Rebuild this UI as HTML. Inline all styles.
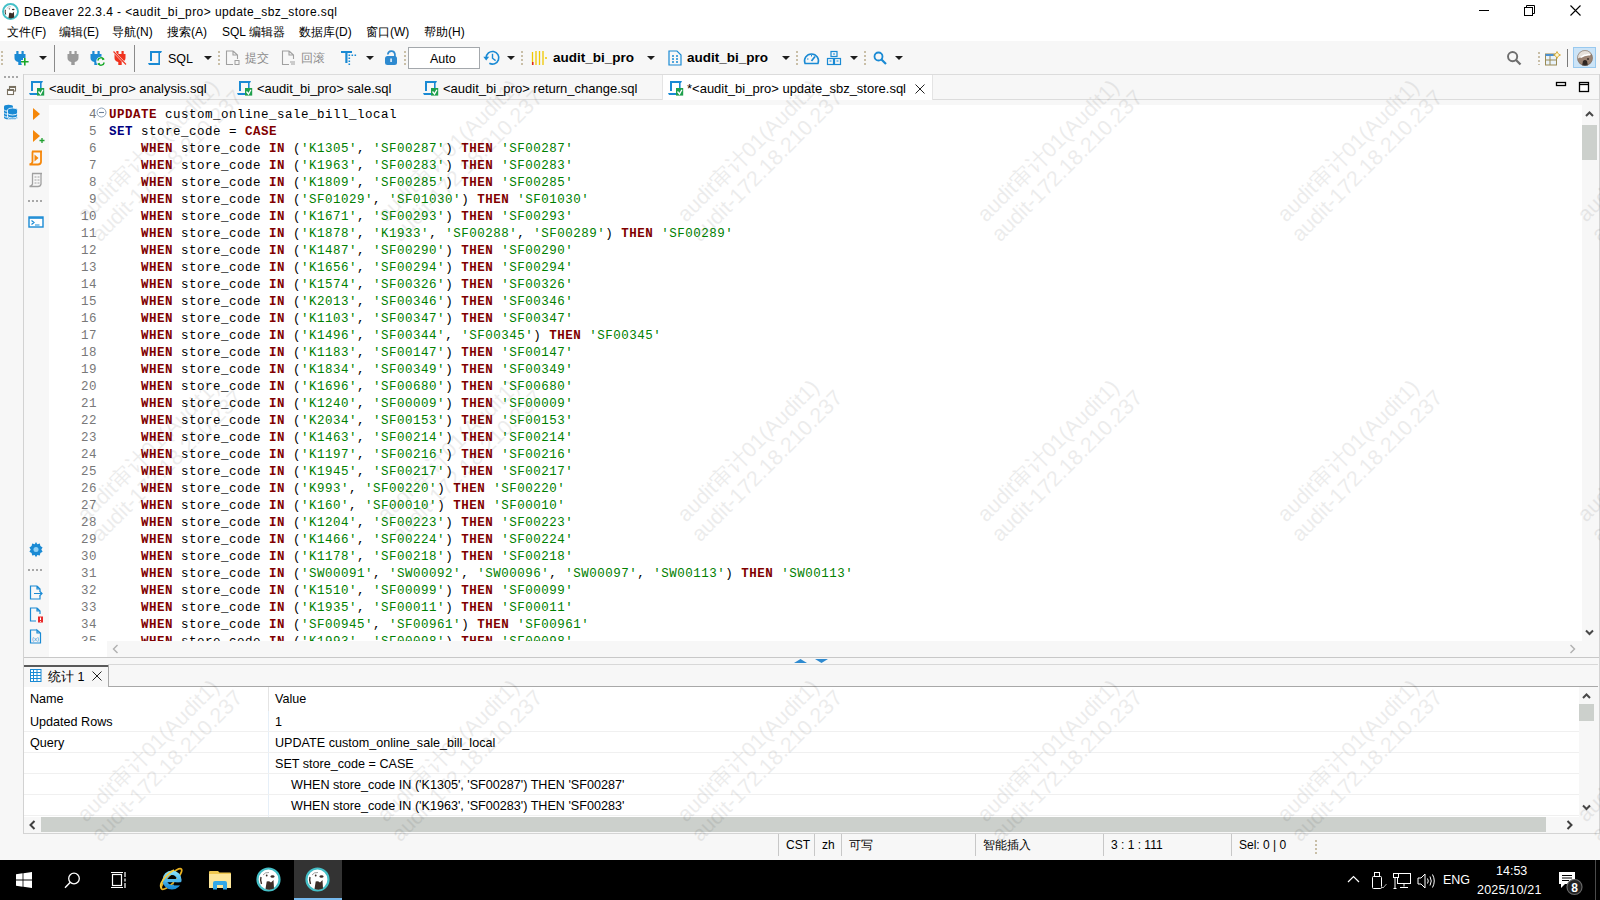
<!DOCTYPE html>
<html><head><meta charset="utf-8">
<style>
*{margin:0;padding:0;box-sizing:border-box}
html,body{width:1600px;height:900px;overflow:hidden;background:#f7f7f7;font-family:"Liberation Sans",sans-serif;font-size:12px;color:#000}
.a{position:absolute}
.t{position:absolute;white-space:nowrap;font-family:"Liberation Sans",sans-serif;font-size:12px;line-height:14px}
svg{position:absolute;overflow:visible}
.ln{position:absolute;left:49px;width:48px;text-align:right;font-family:"Liberation Mono",monospace;font-size:12.5px;letter-spacing:0.5px;line-height:17px;color:#787878;padding-top:2px}
.cl{position:absolute;left:109px;white-space:pre;font-family:"Liberation Mono",monospace;font-size:12.5px;letter-spacing:0.5px;line-height:17px;color:#000;padding-top:2px}
.k{color:#800000;font-weight:bold}
.b{color:#000080;font-weight:bold}
.g{color:#008000}
.grip{position:absolute;width:2px;background:repeating-linear-gradient(to bottom,#c9bfa8 0,#c9bfa8 2px,transparent 2px,transparent 4px)}
.vsep{position:absolute;width:1px;background:#8a8a8a}
.arr{position:absolute;width:0;height:0;border-left:4px solid transparent;border-right:4px solid transparent;border-top:4px solid #1e1e1e}
.wm{position:absolute;width:0;height:0;transform-origin:0 0;transform:rotate(-45deg);font-family:"Liberation Sans",sans-serif;font-size:21.5px;line-height:24px;color:#000;opacity:0.07;white-space:nowrap}
.wm div{position:relative;top:-19px}
.row{position:absolute;left:24px;width:1555px;height:21px;border-bottom:1px solid #f0f0f0}
.sbsep{position:absolute;top:834px;width:1px;height:22px;background:#c8c8c8}
</style></head><body>

<!-- ===== TITLE + MENU ===== -->
<div class="a" style="left:0;top:0;width:1600px;height:41px;background:#fff"></div>
<svg style="left:2px;top:3px" width="17" height="17" viewBox="0 0 25 25"><circle cx="12.5" cy="12.5" r="11" fill="#fff" stroke="#45c0c8" stroke-width="2.8"/><path d="M9.5 22 L10.7 14.5 Q13 13.5 15 15.5 L17.5 13 L18 21.5 Q14 23.5 9.5 22z" fill="#3a2c26"/><ellipse cx="16.5" cy="9.5" rx="2" ry="1.2" fill="#3a2c26"/><circle cx="10.7" cy="8.5" r="0.9" fill="#3a2c26"/><path d="M5 10 Q4 13 5.5 17" fill="none" stroke="#3a2c26" stroke-width="1.4"/><path d="M7 8 Q9 5 13 5.5" fill="none" stroke="#888" stroke-width="0.8"/></svg>
<div class="t" style="left:24px;top:5px;letter-spacing:0.42px">DBeaver 22.3.4 - &lt;audit_bi_pro&gt; update_sbz_store.sql</div>
<!-- window controls -->
<div class="a" style="left:1479px;top:10px;width:10px;height:1px;background:#000"></div>
<svg style="left:1524px;top:5px" width="12" height="12" viewBox="0 0 12 12"><rect x="0.5" y="2.5" width="8" height="8" fill="none" stroke="#000"/><path d="M2.5 2.5 V0.5 H10.5 V8.5 H8.5" fill="none" stroke="#000"/></svg>
<svg style="left:1570px;top:5px" width="11" height="11" viewBox="0 0 11 11"><path d="M0.5 0.5 L10.5 10.5 M10.5 0.5 L0.5 10.5" stroke="#000" stroke-width="1.1"/></svg>

<div class="t" style="left:7px;top:25px">文件(F)</div>
<div class="t" style="left:59px;top:25px">编辑(E)</div>
<div class="t" style="left:112px;top:25px">导航(N)</div>
<div class="t" style="left:167px;top:25px">搜索(A)</div>
<div class="t" style="left:222px;top:25px">SQL 编辑器</div>
<div class="t" style="left:299px;top:25px">数据库(D)</div>
<div class="t" style="left:366px;top:25px">窗口(W)</div>
<div class="t" style="left:424px;top:25px">帮助(H)</div>

<!-- ===== TOOLBAR ===== -->
<div class="a" style="left:0;top:41px;width:1600px;height:34px;background:#f7f7f7"></div><div class="a" style="left:23px;top:74px;width:1577px;height:1px;background:#dcdcdc"></div>
<div class="grip" style="left:1px;top:51px;height:14px"></div>
<!-- plug + -->
<svg style="left:13px;top:50px" width="17" height="16" viewBox="0 0 17 16"><path d="M3.3 1 h2.2 v3 h-2.2z M8.5 1 h2.2 v3 h-2.2z M1.5 4 H12.5 V8 Q12.5 11 8.7 12 V15 H5.3 V12 Q1.5 11 1.5 8 Z" fill="#1a8ad4"/><path d="M11.8 8 V15.5 M8 11.75 H15.6" stroke="#f7f7f7" stroke-width="3.6"/><path d="M11.8 8 V15.5 M8 11.75 H15.6" stroke="#18a828" stroke-width="1.6"/></svg>
<div class="arr" style="left:39px;top:56px"></div>
<div class="vsep" style="left:54px;top:45px;height:27px"></div>
<svg style="left:66px;top:50px" width="14" height="16" viewBox="0 0 14 16"><path d="M3.3 1 h2.2 v3 h-2.2z M8.5 1 h2.2 v3 h-2.2z M1.5 4 H12.5 V8 Q12.5 11 8.7 12 V15 H5.3 V12 Q1.5 11 1.5 8 Z" fill="#9a9a9a"/></svg>
<svg style="left:89px;top:50px" width="17" height="16" viewBox="0 0 17 16"><path d="M3.3 1 h2.2 v3 h-2.2z M8.5 1 h2.2 v3 h-2.2z M1.5 4 H12.5 V8 Q12.5 11 8.7 12 V15 H5.3 V12 Q1.5 11 1.5 8 Z" fill="#1a8ad4"/><circle cx="12" cy="11.5" r="4.8" fill="#f7f7f7"/><path d="M8.8 10.5 a3.3 3.3 0 0 1 6 -1.2 M15.2 12.5 a3.3 3.3 0 0 1 -6 1.2" fill="none" stroke="#18a828" stroke-width="1.4"/><path d="M13.3 7.6 l2.4 1.6 l-2.6 1z M10.7 15.4 l-2.4 -1.6 l2.6 -1z" fill="#18a828"/></svg>
<svg style="left:113px;top:50px" width="14" height="16" viewBox="0 0 14 16"><path d="M3.3 1 h2.2 v3 h-2.2z M8.5 1 h2.2 v3 h-2.2z M1.5 4 H12.5 V8 Q12.5 11 8.7 12 V15 H5.3 V12 Q1.5 11 1.5 8 Z" fill="#f0321e"/><path d="M0.5 1.5 L13 14.5" stroke="#f7f7f7" stroke-width="2.2"/><path d="M0.5 1.5 L13 14.5" stroke="#f0321e" stroke-width="1.1"/></svg>
<div class="vsep" style="left:134px;top:45px;height:27px"></div>
<!-- SQL -->
<svg style="left:148px;top:50px" width="16" height="16" viewBox="0 0 16 16"><path d="M2 1 H14 L13 3 H2z M2 1 h2 v10 h-2z M10.4 2 h1.6 v12 h-1.6z M0 13 H12 V15 H1z" fill="#1a8ad4"/></svg>
<div class="t" style="left:168px;top:52px;font-size:12.5px">SQL</div>
<div class="arr" style="left:204px;top:56px"></div>
<div class="grip" style="left:218px;top:51px;height:14px"></div>
<svg style="left:225px;top:50px" width="15" height="16" viewBox="0 0 15 16"><path d="M8 1 H1.5 V14.5 H8 M8 1 L12.5 5 V9 M8 1 V5 H12.5" fill="none" stroke="#a0a0a0" stroke-width="1.1"/><rect x="10" y="10.5" width="4" height="4" fill="none" stroke="#a0a0a0"/></svg>
<div class="t" style="left:245px;top:51px;color:#8c8c8c">提交</div>
<svg style="left:281px;top:50px" width="15" height="16" viewBox="0 0 15 16"><path d="M8 1 H1.5 V14.5 H8 M8 1 L12.5 5 V9 M8 1 V5 H12.5" fill="none" stroke="#a0a0a0" stroke-width="1.1"/><path d="M9 12 h5 M10 14 h4" stroke="#a0a0a0"/></svg>
<div class="t" style="left:301px;top:51px;color:#8c8c8c">回滚</div>
<svg style="left:340px;top:50px" width="17" height="16" viewBox="0 0 17 16"><path d="M1 1 H12 V3 H1z M5.3 1 h2.2 v12 h-2.2z" fill="#1a8ad4"/><path d="M8.5 4.5h1.6v1.6h-1.6z M8.5 7.5h1.6v1.6h-1.6z M8.5 10.5h1.6v1.6h-1.6z M8.5 13.5h1.6v1.6h-1.6z M11.5 4.5h1.6v1.6h-1.6z M14.5 4.5h1.6v1.6h-1.6z" fill="#1a8ad4"/></svg>
<div class="arr" style="left:366px;top:56px"></div>
<svg style="left:384px;top:50px" width="14" height="16" viewBox="0 0 14 16"><path d="M3.8 4.5 A3.6 3.6 0 0 1 10.9 4 V7" fill="none" stroke="#2e8ad0" stroke-width="1.7"/><rect x="1" y="6" width="12" height="9" rx="2.5" fill="#2e8ad0"/><rect x="6.2" y="8.5" width="1.8" height="3.5" fill="#cfe6f8"/></svg>
<div class="grip" style="left:404px;top:51px;height:14px"></div>
<div class="a" style="left:408px;top:47px;width:72px;height:22px;background:#fff;border:1px solid #a4a8ac"></div>
<div class="t" style="left:430px;top:52px;font-size:12.5px">Auto</div>
<svg style="left:483px;top:50px" width="17" height="16" viewBox="0 0 17 16"><path d="M3.2 7.75 A6.3 6.3 0 1 1 6.35 13.2" fill="none" stroke="#1a8ad4" stroke-width="1.6"/><path d="M0.3 6.8 H6.2 L3.2 10.6z" fill="#1a8ad4"/><path d="M9.5 3.8 V8.2 L12.6 10.6" fill="none" stroke="#1a8ad4" stroke-width="1.4"/></svg>
<div class="arr" style="left:507px;top:56px"></div>
<div class="grip" style="left:521px;top:51px;height:14px"></div>
<svg style="left:531px;top:50px" width="17" height="16" viewBox="0 0 17 16"><path d="M1.5 2 V15 M5 1 V15 M8.5 1 V15 M12 1 V15" stroke="#f0c800" stroke-width="1.3"/><rect x="1" y="12" width="1.5" height="3" fill="#e02020"/><path d="M15 7 v2" stroke="#f0c800" stroke-width="1.5"/></svg>
<div class="t" style="left:553px;top:51px;font-size:13.5px;font-weight:bold">audit_bi_pro</div>
<div class="arr" style="left:647px;top:56px"></div>
<svg style="left:668px;top:50px" width="14" height="16" viewBox="0 0 14 16"><path d="M1 1 H9 L13 5 V15 H1 Z" fill="none" stroke="#1a8ad4" stroke-width="1.2"/><path d="M4 6 h2 M8 6 h2 M4 9 h2 M8 9 h2 M4 12 h2 M8 12 h2" stroke="#1a8ad4" stroke-width="1.3"/></svg>
<div class="t" style="left:687px;top:51px;font-size:13.5px;font-weight:bold">audit_bi_pro</div>
<div class="arr" style="left:782px;top:56px"></div>
<div class="grip" style="left:796px;top:51px;height:14px"></div>
<svg style="left:803px;top:51px" width="17" height="14" viewBox="0 0 17 14"><path d="M2 12.5 A7 7 0 1 1 15 12.5 Z" fill="none" stroke="#1a8ad4" stroke-width="1.5"/><path d="M8.5 10 L12 5.5" stroke="#1a8ad4" stroke-width="1.7"/><path d="M4 8 h1.5 M8.5 4 v1.5" stroke="#1a8ad4"/></svg>
<svg style="left:826px;top:50px" width="16" height="16" viewBox="0 0 16 16"><rect x="5" y="1.5" width="6" height="5" fill="none" stroke="#1a8ad4" stroke-width="1.2"/><rect x="1.5" y="8.5" width="6" height="6" fill="none" stroke="#1a8ad4" stroke-width="1.2"/><rect x="8.5" y="8.5" width="6" height="6" fill="none" stroke="#1a8ad4" stroke-width="1.2"/><path d="M7 4h2 M3.5 11h2 M10.5 11h2" stroke="#1a8ad4"/></svg>
<div class="arr" style="left:850px;top:56px"></div>
<div class="grip" style="left:864px;top:51px;height:14px"></div>
<svg style="left:873px;top:51px" width="14" height="14" viewBox="0 0 14 14"><circle cx="5.5" cy="5.5" r="4" fill="none" stroke="#1a8ad4" stroke-width="1.8"/><path d="M8.5 8.5 L13 13" stroke="#1a8ad4" stroke-width="2.2"/></svg>
<div class="arr" style="left:895px;top:56px"></div>
<!-- right toolbar -->
<svg style="left:1506px;top:50px" width="16" height="16" viewBox="0 0 16 16"><circle cx="6.6" cy="6.6" r="4.6" fill="none" stroke="#6e6e6e" stroke-width="1.9"/><path d="M10 10 L14.5 14.5" stroke="#6e6e6e" stroke-width="2.3"/></svg>
<div class="grip" style="left:1538px;top:52px;height:13px"></div>
<svg style="left:1545px;top:51px" width="16" height="15" viewBox="0 0 16 15"><rect x="0.5" y="3" width="11" height="11" fill="#e8f2fa" stroke="#9a8a55"/><path d="M0.5 3 h11 v2 h-11z" fill="#4a90d0"/><path d="M5 5 v9 M0.5 9 h11" stroke="#9a8a55"/><path d="M12 0.5 l1.2 2.3 l2.3 1.2 l-2.3 1.2 l-1.2 2.3 l-1.2 -2.3 l-2.3 -1.2 l2.3 -1.2z" fill="#fff8d0" stroke="#d0a020" stroke-width="0.8"/></svg>
<div class="vsep" style="left:1567px;top:49px;height:18px;background:#7a7a7a"></div>
<div class="a" style="left:1573px;top:47px;width:23px;height:21px;background:#cce4f7;border:1px solid #99c9ef"></div>
<svg style="left:1577px;top:50px" width="16" height="16" viewBox="0 0 16 16"><defs><clipPath id="avc"><circle cx="8" cy="8" r="7.7"/></clipPath></defs><g clip-path="url(#avc)"><rect width="16" height="16" fill="#9a8272"/><path d="M0 0 H16 V4 Q10 3 4 7 L0 9z" fill="#e6e0da"/><path d="M3 7 Q8 3 14 4 L13 5.5 Q8 5 4 8z" fill="#fff"/><path d="M5 16 L6 11 Q8 9 10 11 L11 16z" fill="#2e2420"/><circle cx="11" cy="9" r="1" fill="#3a2e28"/></g><circle cx="8" cy="8" r="7.5" fill="none" stroke="#6e6258" stroke-width="0.5"/></svg>

<!-- ===== LEFT STRIP ===== -->
<div class="a" style="left:0;top:75px;width:23px;height:785px;background:#f7f7f7"></div><div class="a" style="left:23px;top:74px;width:1px;height:760px;background:#d2d2d2"></div>
<div class="a" style="left:4px;top:76px;width:14px;height:2px;background:repeating-linear-gradient(to right,#a8a8a8 0,#a8a8a8 2px,transparent 2px,transparent 4px)"></div>
<svg style="left:7px;top:86px" width="9" height="9" viewBox="0 0 9 9"><rect x="2.5" y="0.5" width="6" height="4.5" fill="#fff" stroke="#7a7262" stroke-width="1.1"/><path d="M2.5 1.3h6" stroke="#7a7262" stroke-width="1.4"/><rect x="0.5" y="3.5" width="6" height="5" fill="#fff" stroke="#7a7262" stroke-width="1.1"/><path d="M0.5 4.3h6" stroke="#7a7262" stroke-width="1.4"/></svg>
<svg style="left:3px;top:104px" width="16" height="16" viewBox="0 0 16 16"><g fill="#1a8ad4">
<path d="M1 2.5 a4.5 1.8 0 0 1 9 0 V13.5 a4.5 1.8 0 0 1 -9 0z"/></g>
<path d="M1 5.5 a4.5 1.8 0 0 0 9 0 M1 8.5 a4.5 1.8 0 0 0 9 0 M1 11.5 a4.5 1.8 0 0 0 9 0" fill="none" stroke="#fff" stroke-width="0.9"/>
<path d="M4.5 6 a5 2 0 0 1 10 0 V13.5 a5 2 0 0 1 -10 0z" fill="#1a8ad4" stroke="#eaf4fb" stroke-width="0.9"/>
<path d="M4.5 9 a5 2 0 0 0 10 0 M4.5 12 a5 2 0 0 0 10 0" fill="none" stroke="#fff" stroke-width="0.9"/>
</svg>

<!-- ===== EDITOR TAB ROW ===== -->
<div class="a" style="left:24px;top:75px;width:1576px;height:25px;background:#f7f7f7;border-bottom:1px solid #dcdcdc"></div>
<div class="a" style="left:24px;top:100px;width:1576px;height:5px;background:#f7f7f7"></div>
<div class="a" style="left:662px;top:75px;width:271px;height:25px;background:#fff;border-left:1px solid #e4e4e4;border-right:1px solid #e4e4e4"></div>
<!-- tab icons -->
<svg style="left:29px;top:80px" width="17" height="17" viewBox="0 0 17 17"><path d="M3 1 H14 L13 3 H3z M2 1 h2 v10 h-2z M11 2 h1.6 v7 h-1.6z M0 13 H8.5 V15 H1z" fill="#1a8ad4"/><rect x="8" y="8" width="7.2" height="7.6" fill="#1fa04c"/><path d="M9.5 11.5 l2 2.6 l2.4 -4.4" fill="none" stroke="#fff" stroke-width="1.3"/></svg>
<div class="t" style="left:49px;top:82px;font-size:13px">&lt;audit_bi_pro&gt; analysis.sql</div>
<svg style="left:237px;top:80px" width="17" height="17" viewBox="0 0 17 17"><path d="M3 1 H14 L13 3 H3z M2 1 h2 v10 h-2z M11 2 h1.6 v7 h-1.6z M0 13 H8.5 V15 H1z" fill="#1a8ad4"/><rect x="8" y="8" width="7.2" height="7.6" fill="#1fa04c"/><path d="M9.5 11.5 l2 2.6 l2.4 -4.4" fill="none" stroke="#fff" stroke-width="1.3"/></svg>
<div class="t" style="left:257px;top:82px;font-size:13px">&lt;audit_bi_pro&gt; sale.sql</div>
<svg style="left:423px;top:80px" width="17" height="17" viewBox="0 0 17 17"><path d="M3 1 H14 L13 3 H3z M2 1 h2 v10 h-2z M11 2 h1.6 v7 h-1.6z M0 13 H8.5 V15 H1z" fill="#1a8ad4"/><rect x="8" y="8" width="7.2" height="7.6" fill="#1fa04c"/><path d="M9.5 11.5 l2 2.6 l2.4 -4.4" fill="none" stroke="#fff" stroke-width="1.3"/></svg>
<div class="t" style="left:443px;top:82px;font-size:13px">&lt;audit_bi_pro&gt; return_change.sql</div>
<svg style="left:668px;top:80px" width="17" height="17" viewBox="0 0 17 17"><path d="M3 1 H14 L13 3 H3z M2 1 h2 v10 h-2z M11 2 h1.6 v7 h-1.6z M0 13 H8.5 V15 H1z" fill="#1a8ad4"/><rect x="8" y="8" width="7.2" height="7.6" fill="#1fa04c"/><path d="M9.5 11.5 l2 2.6 l2.4 -4.4" fill="none" stroke="#fff" stroke-width="1.3"/></svg>
<div class="t" style="left:687px;top:82px;font-size:13px">*&lt;audit_bi_pro&gt; update_sbz_store.sql</div>
<svg style="left:915px;top:84px" width="10" height="10" viewBox="0 0 10 10"><path d="M0.5 0.5 L9.5 9.5 M9.5 0.5 L0.5 9.5" stroke="#222" stroke-width="1"/></svg>
<!-- min/max -->
<svg style="left:1555px;top:81px" width="12" height="6" viewBox="0 0 12 6"><rect x="1.5" y="1.5" width="9" height="3" fill="#fff" stroke="#000" stroke-width="1.3"/></svg>
<svg style="left:1578px;top:81px" width="12" height="12" viewBox="0 0 12 12"><rect x="1.5" y="1.5" width="9" height="9" fill="#fff" stroke="#000" stroke-width="1.3"/><path d="M1.5 3.5h9" stroke="#000" stroke-width="1.3"/></svg>

<!-- ===== EDITOR ===== -->
<div class="a" style="left:24px;top:105px;width:25px;height:552px;background:#f7f7f7"></div>
<!-- side toolbar icons -->
<svg style="left:32px;top:107px" width="9" height="14" viewBox="0 0 9 14"><path d="M1 1 L8 7 L1 13 Z" fill="#f5870a"/></svg>
<svg style="left:32px;top:129px" width="14" height="15" viewBox="0 0 14 15"><path d="M1 1 L8 7 L1 13 Z" fill="#f5870a"/><path d="M10 9 v5 M7.5 11.5 h5" stroke="#20a030" stroke-width="1.3"/></svg>
<svg style="left:28px;top:150px" width="16" height="16" viewBox="0 0 16 16"><path d="M4 1.5 H14 M13 1.5 V12 Q12.5 14.5 10 14.5 H1.5 Q4 14 4.5 12 V1.5" fill="none" stroke="#f5870a" stroke-width="1.8"/><path d="M6.5 4.5 L10.5 8 L6.5 11.5 Z" fill="#f5870a"/></svg>
<svg style="left:28px;top:172px" width="16" height="16" viewBox="0 0 16 16"><path d="M4 1.5 H14 M13 1.5 V12 Q12.5 14.5 10 14.5 H1.5 Q4 14 4.5 12 V1.5" fill="none" stroke="#a0a0a0" stroke-width="1.3"/><path d="M6.5 5h2 M9.5 5h2 M6.5 8h2 M9.5 8h2 M6.5 11h2 M9.5 11h2" stroke="#a0a0a0"/></svg>
<div class="a" style="left:28px;top:200px;width:14px;height:2px;background:repeating-linear-gradient(to right,#a8a8a8 0,#a8a8a8 2px,transparent 2px,transparent 4px)"></div>
<svg style="left:28px;top:216px" width="16" height="12" viewBox="0 0 16 12"><rect x="1" y="1" width="14" height="10" fill="#fff" stroke="#1a8ad4" stroke-width="1.4"/><path d="M1 2h14" stroke="#1a8ad4" stroke-width="1.6"/><path d="M3.5 4.5 L6 6.5 L3.5 8.5 M7 9 h4.5" fill="none" stroke="#1a8ad4" stroke-width="1.2"/></svg>
<svg style="left:28px;top:541px" width="16" height="16" viewBox="0 0 16 16"><path d="M8 1 l1.3 2.2 l2.5 -0.6 l0.6 2.5 l2.2 1.3 l-1.3 2.2 l1.3 2.2 l-2.2 1.3 l-0.6 2.5 l-2.5 -0.6 l-1.3 2.2 l-1.3 -2.2 l-2.5 0.6 l-0.6 -2.5 l-2.2 -1.3 l1.3 -2.2 l-1.3 -2.2 l2.2 -1.3 l0.6 -2.5 l2.5 0.6z" fill="#1a8ad4"/><circle cx="8" cy="8.5" r="2.5" fill="#8fd0f5"/></svg>
<div class="a" style="left:28px;top:569px;width:14px;height:2px;background:repeating-linear-gradient(to right,#a8a8a8 0,#a8a8a8 2px,transparent 2px,transparent 4px)"></div>
<svg style="left:29px;top:585px" width="15" height="15" viewBox="0 0 15 15"><path d="M8 1 H1.5 V14 H11 V11 M8 1 L11 4 V6 M8 1 V4 H11" fill="none" stroke="#1a8ad4" stroke-width="1.2"/><path d="M5 8.5 h8 M10.5 6 l2.5 2.5 l-2.5 2.5" fill="none" stroke="#1a8ad4" stroke-width="1.2"/></svg>
<svg style="left:29px;top:607px" width="15" height="16" viewBox="0 0 15 16"><path d="M8 1 H1.5 V14 H7 M8 1 L11 4 V7 M8 1 V4 H11" fill="none" stroke="#1a8ad4" stroke-width="1.2"/><rect x="9" y="9.5" width="5" height="6" fill="#e82a2a"/><path d="M11.5 10.5 v2.5 M11.5 14 v0.8" stroke="#fff"/></svg>
<svg style="left:29px;top:629px" width="13" height="15" viewBox="0 0 13 15"><path d="M8 1 H1.5 V14 H11.5 V4 L8 1 V4 H11.5" fill="none" stroke="#1a8ad4" stroke-width="1.2"/><text x="6.5" y="11.5" font-size="6" text-anchor="middle" fill="#1a8ad4" font-family="Liberation Sans">(x)</text></svg>

<div class="a" style="left:49px;top:105px;width:1533px;height:536px;background:#fff"></div>
<div class="a" style="left:0;top:105px;width:1582px;height:536px;overflow:hidden">
<div class="a" style="left:0;top:0">
<div class="ln" style="top:0px">4</div><div class="cl" style="top:0px"><b class="k">UPDATE</b> custom_online_sale_bill_local</div>
<div class="ln" style="top:17px">5</div><div class="cl" style="top:17px"><b class="b">SET</b> store_code = <b class="k">CASE</b></div>
<div class="ln" style="top:34px">6</div><div class="cl" style="top:34px">    <b class="k">WHEN</b> store_code <b class="k">IN</b> (<span class="g">'K1305'</span>, <span class="g">'SF00287'</span>) <b class="k">THEN</b> <span class="g">'SF00287'</span></div>
<div class="ln" style="top:51px">7</div><div class="cl" style="top:51px">    <b class="k">WHEN</b> store_code <b class="k">IN</b> (<span class="g">'K1963'</span>, <span class="g">'SF00283'</span>) <b class="k">THEN</b> <span class="g">'SF00283'</span></div>
<div class="ln" style="top:68px">8</div><div class="cl" style="top:68px">    <b class="k">WHEN</b> store_code <b class="k">IN</b> (<span class="g">'K1809'</span>, <span class="g">'SF00285'</span>) <b class="k">THEN</b> <span class="g">'SF00285'</span></div>
<div class="ln" style="top:85px">9</div><div class="cl" style="top:85px">    <b class="k">WHEN</b> store_code <b class="k">IN</b> (<span class="g">'SF01029'</span>, <span class="g">'SF01030'</span>) <b class="k">THEN</b> <span class="g">'SF01030'</span></div>
<div class="ln" style="top:102px">10</div><div class="cl" style="top:102px">    <b class="k">WHEN</b> store_code <b class="k">IN</b> (<span class="g">'K1671'</span>, <span class="g">'SF00293'</span>) <b class="k">THEN</b> <span class="g">'SF00293'</span></div>
<div class="ln" style="top:119px">11</div><div class="cl" style="top:119px">    <b class="k">WHEN</b> store_code <b class="k">IN</b> (<span class="g">'K1878'</span>, <span class="g">'K1933'</span>, <span class="g">'SF00288'</span>, <span class="g">'SF00289'</span>) <b class="k">THEN</b> <span class="g">'SF00289'</span></div>
<div class="ln" style="top:136px">12</div><div class="cl" style="top:136px">    <b class="k">WHEN</b> store_code <b class="k">IN</b> (<span class="g">'K1487'</span>, <span class="g">'SF00290'</span>) <b class="k">THEN</b> <span class="g">'SF00290'</span></div>
<div class="ln" style="top:153px">13</div><div class="cl" style="top:153px">    <b class="k">WHEN</b> store_code <b class="k">IN</b> (<span class="g">'K1656'</span>, <span class="g">'SF00294'</span>) <b class="k">THEN</b> <span class="g">'SF00294'</span></div>
<div class="ln" style="top:170px">14</div><div class="cl" style="top:170px">    <b class="k">WHEN</b> store_code <b class="k">IN</b> (<span class="g">'K1574'</span>, <span class="g">'SF00326'</span>) <b class="k">THEN</b> <span class="g">'SF00326'</span></div>
<div class="ln" style="top:187px">15</div><div class="cl" style="top:187px">    <b class="k">WHEN</b> store_code <b class="k">IN</b> (<span class="g">'K2013'</span>, <span class="g">'SF00346'</span>) <b class="k">THEN</b> <span class="g">'SF00346'</span></div>
<div class="ln" style="top:204px">16</div><div class="cl" style="top:204px">    <b class="k">WHEN</b> store_code <b class="k">IN</b> (<span class="g">'K1103'</span>, <span class="g">'SF00347'</span>) <b class="k">THEN</b> <span class="g">'SF00347'</span></div>
<div class="ln" style="top:221px">17</div><div class="cl" style="top:221px">    <b class="k">WHEN</b> store_code <b class="k">IN</b> (<span class="g">'K1496'</span>, <span class="g">'SF00344'</span>, <span class="g">'SF00345'</span>) <b class="k">THEN</b> <span class="g">'SF00345'</span></div>
<div class="ln" style="top:238px">18</div><div class="cl" style="top:238px">    <b class="k">WHEN</b> store_code <b class="k">IN</b> (<span class="g">'K1183'</span>, <span class="g">'SF00147'</span>) <b class="k">THEN</b> <span class="g">'SF00147'</span></div>
<div class="ln" style="top:255px">19</div><div class="cl" style="top:255px">    <b class="k">WHEN</b> store_code <b class="k">IN</b> (<span class="g">'K1834'</span>, <span class="g">'SF00349'</span>) <b class="k">THEN</b> <span class="g">'SF00349'</span></div>
<div class="ln" style="top:272px">20</div><div class="cl" style="top:272px">    <b class="k">WHEN</b> store_code <b class="k">IN</b> (<span class="g">'K1696'</span>, <span class="g">'SF00680'</span>) <b class="k">THEN</b> <span class="g">'SF00680'</span></div>
<div class="ln" style="top:289px">21</div><div class="cl" style="top:289px">    <b class="k">WHEN</b> store_code <b class="k">IN</b> (<span class="g">'K1240'</span>, <span class="g">'SF00009'</span>) <b class="k">THEN</b> <span class="g">'SF00009'</span></div>
<div class="ln" style="top:306px">22</div><div class="cl" style="top:306px">    <b class="k">WHEN</b> store_code <b class="k">IN</b> (<span class="g">'K2034'</span>, <span class="g">'SF00153'</span>) <b class="k">THEN</b> <span class="g">'SF00153'</span></div>
<div class="ln" style="top:323px">23</div><div class="cl" style="top:323px">    <b class="k">WHEN</b> store_code <b class="k">IN</b> (<span class="g">'K1463'</span>, <span class="g">'SF00214'</span>) <b class="k">THEN</b> <span class="g">'SF00214'</span></div>
<div class="ln" style="top:340px">24</div><div class="cl" style="top:340px">    <b class="k">WHEN</b> store_code <b class="k">IN</b> (<span class="g">'K1197'</span>, <span class="g">'SF00216'</span>) <b class="k">THEN</b> <span class="g">'SF00216'</span></div>
<div class="ln" style="top:357px">25</div><div class="cl" style="top:357px">    <b class="k">WHEN</b> store_code <b class="k">IN</b> (<span class="g">'K1945'</span>, <span class="g">'SF00217'</span>) <b class="k">THEN</b> <span class="g">'SF00217'</span></div>
<div class="ln" style="top:374px">26</div><div class="cl" style="top:374px">    <b class="k">WHEN</b> store_code <b class="k">IN</b> (<span class="g">'K993'</span>, <span class="g">'SF00220'</span>) <b class="k">THEN</b> <span class="g">'SF00220'</span></div>
<div class="ln" style="top:391px">27</div><div class="cl" style="top:391px">    <b class="k">WHEN</b> store_code <b class="k">IN</b> (<span class="g">'K160'</span>, <span class="g">'SF00010'</span>) <b class="k">THEN</b> <span class="g">'SF00010'</span></div>
<div class="ln" style="top:408px">28</div><div class="cl" style="top:408px">    <b class="k">WHEN</b> store_code <b class="k">IN</b> (<span class="g">'K1204'</span>, <span class="g">'SF00223'</span>) <b class="k">THEN</b> <span class="g">'SF00223'</span></div>
<div class="ln" style="top:425px">29</div><div class="cl" style="top:425px">    <b class="k">WHEN</b> store_code <b class="k">IN</b> (<span class="g">'K1466'</span>, <span class="g">'SF00224'</span>) <b class="k">THEN</b> <span class="g">'SF00224'</span></div>
<div class="ln" style="top:442px">30</div><div class="cl" style="top:442px">    <b class="k">WHEN</b> store_code <b class="k">IN</b> (<span class="g">'K1178'</span>, <span class="g">'SF00218'</span>) <b class="k">THEN</b> <span class="g">'SF00218'</span></div>
<div class="ln" style="top:459px">31</div><div class="cl" style="top:459px">    <b class="k">WHEN</b> store_code <b class="k">IN</b> (<span class="g">'SW00091'</span>, <span class="g">'SW00092'</span>, <span class="g">'SW00096'</span>, <span class="g">'SW00097'</span>, <span class="g">'SW00113'</span>) <b class="k">THEN</b> <span class="g">'SW00113'</span></div>
<div class="ln" style="top:476px">32</div><div class="cl" style="top:476px">    <b class="k">WHEN</b> store_code <b class="k">IN</b> (<span class="g">'K1510'</span>, <span class="g">'SF00099'</span>) <b class="k">THEN</b> <span class="g">'SF00099'</span></div>
<div class="ln" style="top:493px">33</div><div class="cl" style="top:493px">    <b class="k">WHEN</b> store_code <b class="k">IN</b> (<span class="g">'K1935'</span>, <span class="g">'SF00011'</span>) <b class="k">THEN</b> <span class="g">'SF00011'</span></div>
<div class="ln" style="top:510px">34</div><div class="cl" style="top:510px">    <b class="k">WHEN</b> store_code <b class="k">IN</b> (<span class="g">'SF00945'</span>, <span class="g">'SF00961'</span>) <b class="k">THEN</b> <span class="g">'SF00961'</span></div>
<div class="ln" style="top:527px">35</div><div class="cl" style="top:527px">    <b class="k">WHEN</b> store_code <b class="k">IN</b> (<span class="g">'K1993'</span>, <span class="g">'SF00098'</span>) <b class="k">THEN</b> <span class="g">'SF00098'</span></div>
</div></div>
<!-- fold icon -->
<svg style="left:96px;top:107px" width="11" height="11" viewBox="0 0 11 11"><circle cx="5.5" cy="5.5" r="4.5" fill="#fff" stroke="#8aa0b8"/><path d="M3 5.5h5" stroke="#6a7f98" stroke-width="1.1"/></svg>
<!-- editor v scroll -->
<div class="a" style="left:1582px;top:105px;width:16px;height:536px;background:#f7f7f7"></div>
<svg style="left:1584px;top:110px" width="11" height="7" viewBox="0 0 11 7"><path d="M2 6 L5.5 2.5 L9 6" fill="none" stroke="#484848" stroke-width="2"/></svg>
<div class="a" style="left:1582px;top:125px;width:15px;height:35px;background:#ccd0cc"></div>
<svg style="left:1584px;top:629px" width="11" height="7" viewBox="0 0 11 7"><path d="M2 1.5 L5.5 5 L9 1.5" fill="none" stroke="#484848" stroke-width="2"/></svg>
<!-- editor h scroll -->
<div class="a" style="left:107px;top:641px;width:1475px;height:16px;background:#f7f7f7"></div>
<div class="a" style="left:49px;top:641px;width:58px;height:16px;background:#fff"></div>
<svg style="left:112px;top:644px" width="7" height="10" viewBox="0 0 7 10"><path d="M5.5 1 L1.5 5 L5.5 9" fill="none" stroke="#b0b0b0" stroke-width="1.4"/></svg>
<svg style="left:1569px;top:644px" width="7" height="10" viewBox="0 0 7 10"><path d="M1.5 1 L5.5 5 L1.5 9" fill="none" stroke="#b0b0b0" stroke-width="1.4"/></svg>
<div class="a" style="left:24px;top:657px;width:1575px;height:1px;background:#c8c8c8"></div>
<div class="a" style="left:1599px;top:74px;width:1px;height:760px;background:#d4d4d4"></div>
<!-- ===== RESULTS PANEL ===== -->
<div class="a" style="left:24px;top:658px;width:1575px;height:29px;background:#f7f7f7"></div>
<div class="a" style="left:108px;top:664px;width:1490px;height:1px;background:#d8d8d8"></div>
<div class="a" style="left:108px;top:686px;width:1490px;height:1px;background:#a8a8a8"></div>
<svg style="left:794px;top:659px" width="13" height="4" viewBox="0 0 13 4"><path d="M0 4 L6.5 0 L13 4 Z" fill="#2e8ad0"/></svg>
<svg style="left:815px;top:659px" width="13" height="4" viewBox="0 0 13 4"><path d="M0 0 L6.5 4 L13 0 Z" fill="#2e8ad0"/></svg>
<div class="a" style="left:24px;top:665px;width:84px;height:2px;background:#5a5a5a"></div>
<div class="a" style="left:108px;top:665px;width:1px;height:22px;background:#a8a8a8"></div>
<div class="a" style="left:24px;top:667px;width:84px;height:20px;background:#f7f7f7"></div>
<svg style="left:30px;top:669px" width="12" height="13" viewBox="0 0 12 13"><rect x="0.5" y="0.5" width="10.5" height="12" fill="#fff" stroke="#1a8ad4"/><path d="M0.5 3.5h10.5 M0.5 6.5h10.5 M0.5 9.5h10.5 M3.5 0.5v12 M7 0.5v12" stroke="#1a8ad4"/></svg>
<div class="t" style="left:48px;top:670px;font-size:12.5px">统计 1</div>
<svg style="left:92px;top:671px" width="10" height="10" viewBox="0 0 10 10"><path d="M0.5 0.5 L9.5 9.5 M9.5 0.5 L0.5 9.5" stroke="#222" stroke-width="1"/></svg>

<div class="a" style="left:24px;top:687px;width:1555px;height:130px;background:#fff"></div>
<div class="a" style="left:268px;top:687px;width:1px;height:24px;background:#e4e4e4"></div>
<div class="a" style="left:268px;top:711px;width:1px;height:106px;background:#e6eff8"></div>
<div class="a" style="left:24px;top:731px;width:1555px;height:1px;background:#f0f0f0"></div>
<div class="a" style="left:24px;top:752px;width:1555px;height:1px;background:#f0f0f0"></div>
<div class="a" style="left:24px;top:773px;width:1555px;height:1px;background:#f0f0f0"></div>
<div class="a" style="left:24px;top:794px;width:1555px;height:1px;background:#f0f0f0"></div>
<div class="a" style="left:24px;top:815px;width:1555px;height:1px;background:#f0f0f0"></div>
<div class="t" style="left:30px;top:692px;font-size:12.6px">Name</div>
<div class="t" style="left:275px;top:692px;font-size:12.6px">Value</div>
<div class="t" style="left:30px;top:715px;font-size:12.6px">Updated Rows</div>
<div class="t" style="left:275px;top:715px;font-size:12.6px">1</div>
<div class="t" style="left:30px;top:736px;font-size:12.6px">Query</div>
<div class="t" style="left:275px;top:736px;font-size:12.6px">UPDATE custom_online_sale_bill_local</div>
<div class="t" style="left:275px;top:757px;font-size:12.6px">SET store_code = CASE</div>
<div class="t" style="left:291px;top:778px;font-size:12.6px">WHEN store_code IN ('K1305', 'SF00287') THEN 'SF00287'</div>
<div class="t" style="left:291px;top:799px;font-size:12.6px">WHEN store_code IN ('K1963', 'SF00283') THEN 'SF00283'</div>
<!-- results v scroll -->
<div class="a" style="left:1579px;top:687px;width:19px;height:130px;background:#f7f7f7"></div>
<svg style="left:1581px;top:692px" width="11" height="7" viewBox="0 0 11 7"><path d="M2 6 L5.5 2.5 L9 6" fill="none" stroke="#484848" stroke-width="2"/></svg>
<div class="a" style="left:1579px;top:704px;width:15px;height:17px;background:#ccd0cc"></div>
<svg style="left:1581px;top:804px" width="11" height="7" viewBox="0 0 11 7"><path d="M2 1.5 L5.5 5 L9 1.5" fill="none" stroke="#484848" stroke-width="2"/></svg>
<!-- results h scroll -->
<div class="a" style="left:24px;top:817px;width:1574px;height:16px;background:#f7f7f7"></div>
<div class="a" style="left:41px;top:817px;width:1505px;height:15px;background:#ccd0cc"></div>
<svg style="left:29px;top:820px" width="7" height="10" viewBox="0 0 7 10"><path d="M5.5 1 L1.5 5 L5.5 9" fill="none" stroke="#404040" stroke-width="2"/></svg>
<svg style="left:1566px;top:820px" width="7" height="10" viewBox="0 0 7 10"><path d="M1.5 1 L5.5 5 L1.5 9" fill="none" stroke="#404040" stroke-width="2"/></svg>
<div class="a" style="left:24px;top:833px;width:1575px;height:1px;background:#d4d4d4"></div>

<!-- ===== STATUS BAR ===== -->
<div class="a" style="left:0;top:834px;width:1600px;height:26px;background:#f7f7f7"></div>
<div class="sbsep" style="left:778px"></div>
<div class="sbsep" style="left:814px"></div>
<div class="sbsep" style="left:841px"></div>
<div class="sbsep" style="left:975px"></div>
<div class="sbsep" style="left:1103px"></div>
<div class="sbsep" style="left:1231px"></div>
<div class="t" style="left:786px;top:838px">CST</div>
<div class="t" style="left:822px;top:838px">zh</div>
<div class="t" style="left:849px;top:838px">可写</div>
<div class="t" style="left:983px;top:838px">智能插入</div>
<div class="t" style="left:1111px;top:838px">3 : 1 : 111</div>
<div class="t" style="left:1239px;top:838px">Sel: 0 | 0</div>
<div class="grip" style="left:1315px;top:840px;height:15px"></div>

<!-- ===== WATERMARK ===== -->
<div class="a" style="left:0;top:0;width:1600px;height:860px;overflow:hidden;pointer-events:none">
<div class="wm" style="left:-214px;top:-77px"><div>audit审计01(Audit1)</div><div style="margin-left:-4px">audit-172.18.210.237</div></div>
<div class="wm" style="left:86px;top:-77px"><div>audit审计01(Audit1)</div><div style="margin-left:-4px">audit-172.18.210.237</div></div>
<div class="wm" style="left:386px;top:-77px"><div>audit审计01(Audit1)</div><div style="margin-left:-4px">audit-172.18.210.237</div></div>
<div class="wm" style="left:686px;top:-77px"><div>audit审计01(Audit1)</div><div style="margin-left:-4px">audit-172.18.210.237</div></div>
<div class="wm" style="left:986px;top:-77px"><div>audit审计01(Audit1)</div><div style="margin-left:-4px">audit-172.18.210.237</div></div>
<div class="wm" style="left:1286px;top:-77px"><div>audit审计01(Audit1)</div><div style="margin-left:-4px">audit-172.18.210.237</div></div>
<div class="wm" style="left:1586px;top:-77px"><div>audit审计01(Audit1)</div><div style="margin-left:-4px">audit-172.18.210.237</div></div>
<div class="wm" style="left:1886px;top:-77px"><div>audit审计01(Audit1)</div><div style="margin-left:-4px">audit-172.18.210.237</div></div>
<div class="wm" style="left:-214px;top:223px"><div>audit审计01(Audit1)</div><div style="margin-left:-4px">audit-172.18.210.237</div></div>
<div class="wm" style="left:86px;top:223px"><div>audit审计01(Audit1)</div><div style="margin-left:-4px">audit-172.18.210.237</div></div>
<div class="wm" style="left:386px;top:223px"><div>audit审计01(Audit1)</div><div style="margin-left:-4px">audit-172.18.210.237</div></div>
<div class="wm" style="left:686px;top:223px"><div>audit审计01(Audit1)</div><div style="margin-left:-4px">audit-172.18.210.237</div></div>
<div class="wm" style="left:986px;top:223px"><div>audit审计01(Audit1)</div><div style="margin-left:-4px">audit-172.18.210.237</div></div>
<div class="wm" style="left:1286px;top:223px"><div>audit审计01(Audit1)</div><div style="margin-left:-4px">audit-172.18.210.237</div></div>
<div class="wm" style="left:1586px;top:223px"><div>audit审计01(Audit1)</div><div style="margin-left:-4px">audit-172.18.210.237</div></div>
<div class="wm" style="left:1886px;top:223px"><div>audit审计01(Audit1)</div><div style="margin-left:-4px">audit-172.18.210.237</div></div>
<div class="wm" style="left:-214px;top:523px"><div>audit审计01(Audit1)</div><div style="margin-left:-4px">audit-172.18.210.237</div></div>
<div class="wm" style="left:86px;top:523px"><div>audit审计01(Audit1)</div><div style="margin-left:-4px">audit-172.18.210.237</div></div>
<div class="wm" style="left:386px;top:523px"><div>audit审计01(Audit1)</div><div style="margin-left:-4px">audit-172.18.210.237</div></div>
<div class="wm" style="left:686px;top:523px"><div>audit审计01(Audit1)</div><div style="margin-left:-4px">audit-172.18.210.237</div></div>
<div class="wm" style="left:986px;top:523px"><div>audit审计01(Audit1)</div><div style="margin-left:-4px">audit-172.18.210.237</div></div>
<div class="wm" style="left:1286px;top:523px"><div>audit审计01(Audit1)</div><div style="margin-left:-4px">audit-172.18.210.237</div></div>
<div class="wm" style="left:1586px;top:523px"><div>audit审计01(Audit1)</div><div style="margin-left:-4px">audit-172.18.210.237</div></div>
<div class="wm" style="left:1886px;top:523px"><div>audit审计01(Audit1)</div><div style="margin-left:-4px">audit-172.18.210.237</div></div>
<div class="wm" style="left:-214px;top:823px"><div>audit审计01(Audit1)</div><div style="margin-left:-4px">audit-172.18.210.237</div></div>
<div class="wm" style="left:86px;top:823px"><div>audit审计01(Audit1)</div><div style="margin-left:-4px">audit-172.18.210.237</div></div>
<div class="wm" style="left:386px;top:823px"><div>audit审计01(Audit1)</div><div style="margin-left:-4px">audit-172.18.210.237</div></div>
<div class="wm" style="left:686px;top:823px"><div>audit审计01(Audit1)</div><div style="margin-left:-4px">audit-172.18.210.237</div></div>
<div class="wm" style="left:986px;top:823px"><div>audit审计01(Audit1)</div><div style="margin-left:-4px">audit-172.18.210.237</div></div>
<div class="wm" style="left:1286px;top:823px"><div>audit审计01(Audit1)</div><div style="margin-left:-4px">audit-172.18.210.237</div></div>
<div class="wm" style="left:1586px;top:823px"><div>audit审计01(Audit1)</div><div style="margin-left:-4px">audit-172.18.210.237</div></div>
<div class="wm" style="left:1886px;top:823px"><div>audit审计01(Audit1)</div><div style="margin-left:-4px">audit-172.18.210.237</div></div>
<div class="wm" style="left:-214px;top:1123px"><div>audit审计01(Audit1)</div><div style="margin-left:-4px">audit-172.18.210.237</div></div>
<div class="wm" style="left:86px;top:1123px"><div>audit审计01(Audit1)</div><div style="margin-left:-4px">audit-172.18.210.237</div></div>
<div class="wm" style="left:386px;top:1123px"><div>audit审计01(Audit1)</div><div style="margin-left:-4px">audit-172.18.210.237</div></div>
<div class="wm" style="left:686px;top:1123px"><div>audit审计01(Audit1)</div><div style="margin-left:-4px">audit-172.18.210.237</div></div>
<div class="wm" style="left:986px;top:1123px"><div>audit审计01(Audit1)</div><div style="margin-left:-4px">audit-172.18.210.237</div></div>
<div class="wm" style="left:1286px;top:1123px"><div>audit审计01(Audit1)</div><div style="margin-left:-4px">audit-172.18.210.237</div></div>
<div class="wm" style="left:1586px;top:1123px"><div>audit审计01(Audit1)</div><div style="margin-left:-4px">audit-172.18.210.237</div></div>
<div class="wm" style="left:1886px;top:1123px"><div>audit审计01(Audit1)</div><div style="margin-left:-4px">audit-172.18.210.237</div></div>
</div>

<!-- ===== TASKBAR ===== -->
<div class="a" style="left:0;top:860px;width:1600px;height:40px;background:#000"></div>
<svg style="left:16px;top:872px" width="16" height="16" viewBox="0 0 16 16"><path d="M0 2.2 L6.6 1.3 V7.6 H0 Z M7.4 1.2 L16 0 V7.6 H7.4 Z M0 8.4 H6.6 V14.7 L0 13.8 Z M7.4 8.4 H16 V16 L7.4 14.8 Z" fill="#fff"/></svg>
<svg style="left:64px;top:872px" width="17" height="17" viewBox="0 0 17 17"><circle cx="10" cy="6.5" r="5.3" fill="none" stroke="#fff" stroke-width="1.3"/><path d="M6.3 10.3 L1 15.8" stroke="#fff" stroke-width="1.4"/></svg>
<svg style="left:111px;top:871px" width="18" height="18" viewBox="0 0 18 18"><rect x="1.5" y="3.5" width="9" height="11" fill="none" stroke="#fff" stroke-width="1.2"/><path d="M0 1.5 h12 M0 16.5 h12" stroke="#fff" stroke-width="1.2"/><path d="M14 1 v5 M14 7.5 v3 M14 12 v5" stroke="#fff" stroke-width="1.2"/></svg>
<svg style="left:158px;top:866px" width="26" height="26" viewBox="0 0 26 26"><defs><linearGradient id="ieg" x1="0" y1="0" x2="0" y2="1"><stop offset="0" stop-color="#80dcfa"/><stop offset="1" stop-color="#2090d8"/></linearGradient></defs>
<ellipse cx="13.5" cy="13" rx="14" ry="4" transform="rotate(-45 13.5 13)" fill="none" stroke="#e8b020" stroke-width="1.7"/>
<circle cx="14" cy="14" r="7.3" fill="none" stroke="url(#ieg)" stroke-width="4.6"/>
<rect x="16" y="16.2" width="8" height="3.2" fill="#000"/>
<rect x="7" y="13" width="14.5" height="3.2" fill="#50b8ec"/>
<path d="M3.6 22.4 Q1 20 5 14 Q9 8 16 4" fill="none" stroke="#f6cc40" stroke-width="1.7"/>
</svg>
<svg style="left:209px;top:871px" width="22" height="19" viewBox="0 0 22 19"><path d="M0 1 Q0 0 1 0 H9 L10.5 1.5 H21 Q22 1.5 22 2.5 V17 H0z" fill="#f0c850"/><rect x="0" y="3" width="22" height="14" fill="#fde69a"/><path d="M4 18.5 V12 Q4 10 6 10 H16 Q18 10 18 12 V18.5 H14 V14 H8 V18.5z" fill="#32a8e8"/></svg>
<svg style="left:256px;top:867px" width="25" height="25" viewBox="0 0 25 25"><circle cx="12.5" cy="12.5" r="11" fill="#fff" stroke="#45c0c8" stroke-width="2.2"/><path d="M9.5 22 L10.7 14.5 Q13 13.5 15 15.5 L17.5 13 L18 21.5 Q14 23.5 9.5 22z" fill="#3a2c26"/><ellipse cx="16.5" cy="9.5" rx="2" ry="1.2" fill="#3a2c26"/><circle cx="10.7" cy="8.5" r="0.9" fill="#3a2c26"/><path d="M5 10 Q4 13 5.5 17" fill="none" stroke="#3a2c26" stroke-width="1.4"/><path d="M7 8 Q9 5 13 5.5" fill="none" stroke="#888" stroke-width="0.8"/></svg>
<div class="a" style="left:294px;top:860px;width:48px;height:40px;background:#333"></div>
<div class="a" style="left:294px;top:898px;width:48px;height:2px;background:#76b9ed"></div>
<svg style="left:305px;top:867px" width="25" height="25" viewBox="0 0 25 25"><circle cx="12.5" cy="12.5" r="11" fill="#fff" stroke="#45c0c8" stroke-width="2.2"/><path d="M9.5 22 L10.7 14.5 Q13 13.5 15 15.5 L17.5 13 L18 21.5 Q14 23.5 9.5 22z" fill="#3a2c26"/><ellipse cx="16.5" cy="9.5" rx="2" ry="1.2" fill="#3a2c26"/><circle cx="10.7" cy="8.5" r="0.9" fill="#3a2c26"/><path d="M5 10 Q4 13 5.5 17" fill="none" stroke="#3a2c26" stroke-width="1.4"/><path d="M7 8 Q9 5 13 5.5" fill="none" stroke="#888" stroke-width="0.8"/></svg>
<!-- tray -->
<svg style="left:1347px;top:875px" width="13" height="8" viewBox="0 0 13 8"><path d="M1 7 L6.5 1.5 L12 7" fill="none" stroke="#fff" stroke-width="1.2"/></svg>
<svg style="left:1372px;top:872px" width="15" height="17" viewBox="0 0 15 17"><rect x="2.5" y="0.5" width="5" height="4" fill="none" stroke="#fff"/><rect x="0.5" y="4.5" width="9" height="12" rx="1" fill="none" stroke="#fff"/><path d="M9 14 l2 2 l3.5 -4" fill="none" stroke="#aaa"/></svg>
<svg style="left:1393px;top:873px" width="18" height="16" viewBox="0 0 18 16"><rect x="4.5" y="0.5" width="13" height="10" fill="none" stroke="#fff"/><path d="M11 10.5 v3 M7 14.5 h8" stroke="#fff"/><rect x="0.5" y="0.5" width="5" height="4" fill="#000" stroke="#fff"/><path d="M2 5 v10 M0.5 15.5 h3" stroke="#fff"/></svg>
<svg style="left:1417px;top:873px" width="18" height="16" viewBox="0 0 18 16"><path d="M1 5 H4 L8 1 V15 L4 11 H1 Z" fill="none" stroke="#fff"/><path d="M10.5 5.5 Q12 8 10.5 10.5 M13 3.5 Q15.5 8 13 12.5 M15.5 1.5 Q19 8 15.5 14.5" fill="none" stroke="#fff"/></svg>
<div class="t" style="left:1443px;top:873px;color:#fff;font-size:12.5px">ENG</div>
<div class="t" style="left:1496px;top:864px;color:#fff;font-size:12.5px">14:53</div>
<div class="t" style="left:1477px;top:883px;color:#fff;font-size:12.5px;letter-spacing:0.2px">2025/10/21</div>
<svg style="left:1558px;top:871px" width="26" height="26" viewBox="0 0 26 26"><path d="M1 1 H17 V13 H7 L3 17 V13 H1 Z" fill="#fff"/><path d="M4 4.5h10 M4 7h10 M4 9.5h7" stroke="#000" stroke-width="1"/><circle cx="16.5" cy="16" r="7.5" fill="#222" stroke="#666" stroke-width="1.2"/><text x="16.5" y="20.5" font-size="12" font-weight="bold" text-anchor="middle" fill="#fff" font-family="Liberation Sans">8</text></svg>
<div class="a" style="left:1595px;top:860px;width:1px;height:40px;background:#4a4a4a"></div>
</body></html>
